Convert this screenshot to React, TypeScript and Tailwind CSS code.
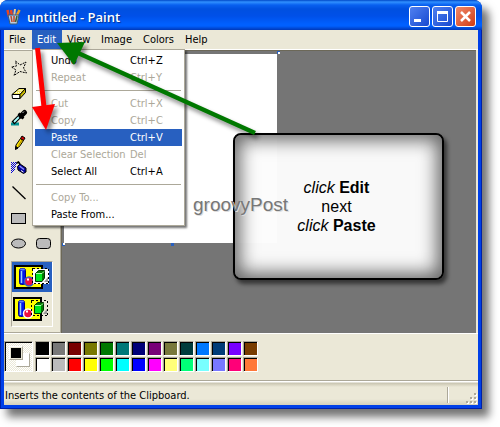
import type { ReactNode } from "react";

const tahoma = "font-['DejaVu_Sans_Condensed','DejaVu_Sans',sans-serif]";

const menus = [
  { label: "File", width: "w-7" },
  { label: "Edit", width: "w-[30px]" },
  { label: "View", width: "w-[34px]" },
  { label: "Image", width: "w-[42px]" },
  { label: "Colors", width: "w-[42px]" },
  { label: "Help", width: "w-8" },
];

type Item = { label: string; keys?: string; off?: boolean; active?: boolean };

const groups: Item[][] = [
  [
    { label: "Undo", keys: "Ctrl+Z" },
    { label: "Repeat", keys: "Ctrl+Y", off: true },
  ],
  [
    { label: "Cut", keys: "Ctrl+X", off: true },
    { label: "Copy", keys: "Ctrl+C", off: true },
    { label: "Paste", keys: "Ctrl+V", active: true },
    { label: "Clear Selection", keys: "Del", off: true },
    { label: "Select All", keys: "Ctrl+A" },
  ],
  [{ label: "Copy To...", off: true }, { label: "Paste From..." }],
];

const colors: [string, string][] = [
  ["Black", "bg-[#000000]"], ["Gray", "bg-[#787878]"], ["Maroon", "bg-[#780000]"],
  ["Olive", "bg-[#787800]"], ["Green", "bg-[#007800]"], ["Teal", "bg-[#007878]"],
  ["Navy", "bg-[#000078]"], ["Purple", "bg-[#780078]"], ["Khaki", "bg-[#78783c]"],
  ["Dark teal", "bg-[#003c3c]"], ["Azure", "bg-[#0078ff]"], ["Steel", "bg-[#003c78]"],
  ["Violet", "bg-[#7800ff]"], ["Brown", "bg-[#783c00]"],
  ["White", "bg-[#ffffff]"], ["Silver", "bg-[#bbbbbb]"], ["Red", "bg-[#ff0000]"],
  ["Yellow", "bg-[#ffff00]"], ["Lime", "bg-[#00ff00]"], ["Cyan", "bg-[#00ffff]"],
  ["Blue", "bg-[#0000ff]"], ["Magenta", "bg-[#ff00ff]"], ["Pale yellow", "bg-[#ffff78]"],
  ["Spring green", "bg-[#00ff78]"], ["Pale cyan", "bg-[#78ffff]"], ["Periwinkle", "bg-[#7878ff]"],
  ["Pink", "bg-[#ff0078]"], ["Orange", "bg-[#ff7838]"],
];

function Glyph({ children }: { children?: ReactNode }) {
  return (
    <svg width="18" height="18" viewBox="0 0 18 18" fill="none" stroke="#000" aria-hidden="true">
      {children}
    </svg>
  );
}

const tools: { name: string; art: ReactNode }[] = [
  {
    name: "Free-form select",
    art: <path strokeDasharray="2 1" d="M5.500 2 L10 6 L16 3 L13.500 9 L16.500 14 L10 12.500 L4 16.500 L6 11 L1.500 8 L6.500 7 Z" />,
  },
  { name: "Select", art: <rect x="2.5" y="4.5" width="13" height="9" strokeDasharray="2 2" /> },
  {
    name: "Eraser",
    art: (
      <>
        <path d="M2 10.500 L9 4.500 H15.500 L10 10.500 Z" fill="#f4e860" />
        <path d="M2 10.500 H10 V14.500 H2.500 Z" fill="#fff" />
        <path d="M10 10.500 L15.500 4.500 V8.500 L10 14.500 Z" fill="#c8b800" />
        <path d="M8.500 6.500 H12.500 M6 8.500 H11" stroke="#fff" strokeDasharray="1 1" />
      </>
    ),
  },
  { name: "Fill", art: <path d="M4 9 L9 4 L14 9 L9 14 Z" fill="#fff" /> },
  {
    name: "Pick color",
    art: (
      <>
        <path d="M1 15 H9" stroke="#009090" strokeWidth="3" />
        <path d="M3 14 L10.500 6.500" strokeWidth="4" />
        <path d="M4 13 L10.500 6.500" stroke="#a8ffff" strokeWidth="1.800" />
        <path d="M8.500 4.500 L13.500 9.500" strokeWidth="2.500" />
        <path d="M11 7 L14.500 3.500" strokeWidth="5" strokeLinecap="round" />
        <path d="M12.500 4 L14 2.500" stroke="#bbb" />
      </>
    ),
  },
  { name: "Magnifier", art: <path d="M9 9 L15 15 M4 4 H10 V10 H4 Z" /> },
  {
    name: "Pencil",
    art: (
      <>
        <path d="M5.500 15 L6 11 L10.500 4.500 L13.500 6.500 L9.500 12.500 Z" fill="#ffe800" />
        <path d="M10.500 4.500 L12 2 L15 4 L13.500 6.500 Z" fill="#d00000" />
        <path d="M5.500 15.500 L5.800 12.500 L8 14 Z" fill="#000" />
        <path d="M12 6 L8.500 11.500" stroke="#a88000" />
      </>
    ),
  },
  { name: "Brush", art: <path d="M4 14 L14 4" strokeWidth="2" /> },
  {
    name: "Airbrush",
    art: (
      <>
        <g stroke="#0000d8" strokeDasharray="1 1" shapeRendering="crispEdges">
          <path d="M1 3.500 h6 M1 5.500 h6 M1 7.500 h5 M1 9.500 h4 M1 11.500 h3 M1 13.500 h2" />
          <path d="M2 4.500 h5 M2 6.500 h4 M2 8.500 h4 M2 10.500 h3 M2 12.500 h2" />
        </g>
        <path d="M7.500 7.500 L10 5 L16 9 V13 L13.500 14.500 L8 11 Z" fill="#0000a0" />
        <path d="M9.500 7 L14 10.500" stroke="#9090ff" strokeWidth="1.500" />
        <path d="M11 11.500 L13.500 13" stroke="#fff" />
        <path d="M6.500 4 L8.500 3 L10 5" strokeWidth="1.500" />
      </>
    ),
  },
  { name: "Text", art: <path d="M5 14 L9 4 L13 14 M6 11 H12" /> },
  { name: "Line", art: <path d="M2.500 2.500 L15.500 15" strokeWidth="1.300" /> },
  { name: "Curve", art: <path d="M3 4 C14 4 3 14 15 14" /> },
  { name: "Rectangle", art: <rect x="1.500" y="4.500" width="14" height="10" fill="#bbb" /> },
  { name: "Polygon", art: <path d="M3 4 V14 H15 V9 H8 V4 Z" fill="#bbb" /> },
  { name: "Ellipse", art: <ellipse cx="8.500" cy="9.500" rx="7" ry="4.500" fill="#bbb" /> },
  { name: "Rounded rectangle", art: <rect x="1.500" y="4.500" width="14" height="10" rx="3" fill="#bbb" /> },
];

function PasteMode({ opaque }: { opaque?: boolean }) {
  return (
    <svg width="36" height="24" viewBox="0 0 36 24" aria-hidden="true">
      <rect x="1" y="1" width="27" height="22" fill="#ff0" stroke="#000" strokeWidth="2" />
      <rect x="5.500" y="3.500" width="6" height="16" rx="2" fill="#0018e8" stroke="#000080" />
      <path d="M7.500 6 V18" stroke="#9cf" strokeWidth="1.500" />
      <ellipse cx="8.500" cy="4.500" rx="2.500" ry="1" fill="#6080ff" />
      <circle cx="15" cy="16.500" r="4.500" fill="#f01040" stroke={opaque ? "#3060c8" : "#fff"} strokeWidth="1.500" />
      <path d="M13 14.500 h2" stroke="#fff" strokeWidth="2" />
      <rect x="18.500" y="3.500" width="16" height="15" fill={opaque ? "#fff" : "none"} stroke="#000" strokeDasharray="2 2" shapeRendering="crispEdges" />
      <path d="M30 17 L34 12 V17 Z" fill="#999" />
      <path d="M21.500 8.500 L24.500 5.500 H30.500 V13 L28 16.500 H21.500 Z" fill="#007800" stroke="#003800" />
      <rect x="22" y="9" width="6" height="7" fill="#00e820" />
      <path d="M22 8.500 H28 L30 6.500" stroke="#afa" fill="none" />
    </svg>
  );
}

const caption = "flex size-[21px] items-center justify-center rounded-[3px] border border-white";

function EditMenu() {
  return (
    <div role="menu" className="absolute top-full left-0 z-10 w-[153px] border border-[#aca899] bg-white p-0.5 text-black shadow-[2px_2px_2px_rgba(0,0,0,0.55)]">
      {groups.map((group, g) => (
        <div key={g}>
          {g > 0 && <hr className="mx-px my-1 border-t border-[#aca899]" />}
          {group.map((item) => (
            <button
              key={item.label}
              role="menuitem"
              disabled={item.off}
              className={`flex h-[17px] w-full items-center pt-0.5 pl-4 text-left whitespace-nowrap ${
                item.active ? "bg-[#2860c0] text-white" : item.off ? "text-[#aca899]" : ""
              }`}
            >
              <span className="w-[79px]">{item.label}</span>
              <span>{item.keys}</span>
            </button>
          ))}
        </div>
      ))}
    </div>
  );
}

export default function App() {
  return (
    <main className="bg-white pr-[18px] pb-[18px]">
      <div className={`relative rounded-t-lg bg-[#0020a8] text-[11px] text-black shadow-[7px_8px_9px_rgba(0,0,0,0.55)] ${tahoma}`}>
        <header className="flex h-[30px] items-center gap-0.5 rounded-t-lg bg-[linear-gradient(#0048c8_0px,#3090ff_2px,#0860f0_5px,#0050e0_9px,#0050e8_16px,#0060ff_24px,#0060ff_26px,#0038b8_30px)] pt-[3px] pr-1.5 pl-1.5">
          <svg width="16" height="18" viewBox="0 0 16 18" aria-hidden="true">
            <path d="M3 9 L1.500 2 M6 9 L5 2" stroke="#e84820" strokeWidth="2.500" />
            <path d="M8 9 L9 1" stroke="#e8c890" strokeWidth="2" />
            <path d="M10 9 L13.500 2" stroke="#f0a020" strokeWidth="2.500" />
            <path d="M2 7 L4 16 H11 L13 7 Z" fill="#b8cce0" stroke="#385878" />
            <path d="M5 8 L6 14 M8 8 V14" stroke="#c04828" strokeWidth="1.500" />
            <path d="M11 8 L9.500 14" stroke="#406030" strokeWidth="1.500" />
          </svg>
          <h1 className="ml-[3px] grow pt-0.5 font-['Open_Sans','Noto_Sans',sans-serif] text-[13px] font-semibold whitespace-nowrap text-white [text-shadow:1px_1px_1px_#003090]">
            untitled - Paint
          </h1>
          <button aria-label="Minimize" className={`${caption} bg-linear-to-br from-[#5080f0] to-[#1848d0]`}>
            <svg width="19" height="19" aria-hidden="true"><path d="M4 13.500 h7" stroke="#fff" strokeWidth="3" /></svg>
          </button>
          <button aria-label="Maximize" className={`${caption} bg-linear-to-br from-[#5080f0] to-[#1848d0]`}>
            <svg width="19" height="19" fill="none" stroke="#fff" aria-hidden="true"><path d="M4.500 5 V14.500 H14.500 V5" /><path d="M4 5.500 H15" strokeWidth="3" /></svg>
          </button>
          <button aria-label="Close" className={`${caption} bg-linear-to-br from-[#f08868] to-[#d03808]`}>
            <svg width="19" height="19" aria-hidden="true"><path d="M5 5 L14 14 M14 5 L5 14" stroke="#fff" strokeWidth="2.500" /></svg>
          </button>
        </header>

        <div className="px-px pb-px">
          <div className="border-x-3 border-b-3 border-[#0040e8] bg-[#ebe8d7]">
            <nav aria-label="Menu bar" className="flex h-[19px]">
              {menus.map((m) => (
                <div key={m.label} className={`relative ${m.width}`}>
                  <button className={`flex h-[19px] w-full items-center pt-0.5 pl-[5px] ${m.label === "Edit" ? "bg-[#2860c0] text-white" : ""}`}>
                    {m.label}
                  </button>
                  {m.label === "Edit" && <EditMenu />}
                </div>
              ))}
            </nav>

            <div className="flex border-t border-b border-t-white border-b-white">
              <aside className="flex w-[57px] flex-col border-t border-r border-b border-[#aca899] pt-1 pb-[5px] pl-[3px]">
                <div role="toolbar" aria-label="Tools" className="grid w-[49px] grid-cols-2">
                  {tools.map((t) => (
                    <button key={t.name} aria-label={t.name} className="flex h-[25px] items-center justify-center">
                      <Glyph>{t.art}</Glyph>
                    </button>
                  ))}
                </div>
                <div className="mt-1.5 ml-1 w-[42px] border border-t-[#aca899] border-r-white border-b-white border-l-[#aca899]">
                  <button aria-label="Opaque paste" className="flex h-[30px] w-full items-center justify-center bg-[#2860c0]"><PasteMode opaque /></button>
                  <button aria-label="Transparent paste" className="flex h-[34px] w-full items-center justify-start pl-px"><PasteMode /></button>
                </div>
              </aside>
              <section aria-label="Canvas" className="mr-0.5 grow border-t border-l border-[#6c6858] bg-[#757575] pt-[3px] pl-0.5">
                <div className="relative h-[189px] w-[213px] bg-white">
                  <i className="absolute -top-[3px] -right-[3px] size-[3px] border-t border-l border-[#2860c0] bg-white" />
                  <i className="absolute -bottom-[3px] -left-[2px] size-[3px] border-b border-l border-[#2860c0] bg-white" />
                  <i className="absolute -bottom-[3px] left-1/2 size-[3px] bg-[#2860c0]" />
                </div>
              </section>
            </div>

            <section aria-label="Color palette" className="flex items-start gap-0.5 pt-[7px] pb-2">
              <div className="relative h-[31px] w-[29px] border border-t-[#aca899] border-r-white border-b-white border-l-[#aca899] bg-[repeating-conic-gradient(#fff_0_25%,#ebe8d7_0_50%)] bg-size-[2px_2px] shadow-[inset_1px_1px_0_#000]">
                <i className="absolute top-[11px] left-[11px] size-[14px] border border-t-white border-r-[#aca899] border-b-[#aca899] border-l-white bg-white" />
                <i className="absolute top-1 left-1 size-[14px] border border-t-white border-r-[#aca899] border-b-[#aca899] border-l-white bg-black outline-1 -outline-offset-2 outline-[#ebe8d7]" />
              </div>
              <div className="grid grid-cols-14 gap-px">
                {colors.map(([name, fill]) => (
                  <button
                    key={name}
                    aria-label={name}
                    className={`size-[15px] border border-t-[#aca899] border-r-white border-b-white border-l-[#aca899] shadow-[inset_1px_1px_0_#000] ${fill}`}
                  />
                ))}
              </div>
            </section>

            <footer className="flex h-[25px] items-center border-t border-[#aca899] bg-[linear-gradient(#fff_0,#fff_1px,#c8c4b0_2px,#ebe8d7_6px,#ebe8d7_18px,#d4d0bc_24px)] pt-1">
              <p className="grow pt-0.5 pl-px">Inserts the contents of the Clipboard.</p>
              <span className="mr-4 h-4 w-0.5 border-r border-l border-r-white border-l-[#aca899]" />
              <svg className="self-end" width="13" height="13" viewBox="0 0 13 13" aria-hidden="true">
                <path transform="translate(1 1)" fill="#fff" d="M9 1h2v2h-2z M9 5h2v2h-2z M5 5h2v2h-2z M9 9h2v2h-2z M5 9h2v2h-2z M1 9h2v2h-2z" />
                <path fill="#aca899" d="M9 1h2v2h-2z M9 5h2v2h-2z M5 5h2v2h-2z M9 9h2v2h-2z M5 9h2v2h-2z M1 9h2v2h-2z" />
              </svg>
            </footer>
          </div>
        </div>

        <div className="absolute top-[133px] left-[233px] z-20 flex h-[147px] w-[211px] items-center justify-center rounded-lg border-2 border-black bg-[#fcfcfc]/98 pr-1 font-['Liberation_Sans',Arial,sans-serif] text-base leading-[19px] shadow-[3px_4px_4px_rgba(0,0,0,0.55),inset_0_0_18px_5px_rgba(0,0,0,0.6)]">
          <p className="text-center">
            <em>click</em> <b>Edit</b>
            <br />
            next
            <br />
            <em>click</em> <b>Paste</b>
          </p>
        </div>

        <p className="pointer-events-none absolute top-[193px] left-[193px] z-30 font-['Liberation_Sans',Arial,sans-serif] text-[19px] leading-6 text-[#777] [text-shadow:1px_1px_0_#ddd]">
          groovyPost
        </p>

        <svg className="pointer-events-none absolute top-0 left-0 z-30 drop-shadow-[3px_4px_2px_rgba(0,0,0,0.45)]" width="300" height="160" viewBox="0 0 300 160" aria-hidden="true">
          <path d="M255 133 L78 53" stroke="#007800" strokeWidth="4.500" />
          <path d="M57 43 L85 42 L74 65 Z" fill="#007800" />
          <path d="M37.500 48 L44 107" stroke="#f00" strokeWidth="5" />
          <path d="M46 130 L32 107 L55 104 Z" fill="#f00" />
        </svg>
      </div>
    </main>
  );
}
